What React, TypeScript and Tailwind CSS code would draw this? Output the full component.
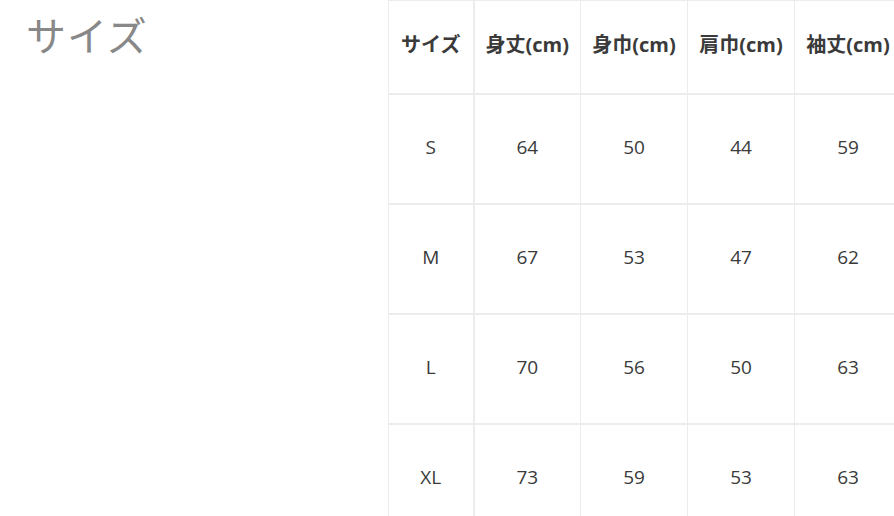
const headers = ["サイズ", "身丈(cm)", "身巾(cm)", "肩巾(cm)", "袖丈(cm)"];

const rows = [
  ["S", "64", "50", "44", "59"],
  ["M", "67", "53", "47", "62"],
  ["L", "70", "56", "50", "63"],
  ["XL", "73", "59", "53", "63"],
];

export default function App() {
  return (
    <div
      className="flex w-[894px] h-[516px] overflow-hidden bg-white"
      style={{ fontFamily: '"Open Sans", "Noto Sans CJK JP", sans-serif' }}
    >
      {/* Title */}
      <div className="w-[388px] shrink-0 pl-[26px] pt-[10px]">
        <h2 className="text-[40px] leading-[52px] text-[#888888] font-normal tracking-[1px]">
          サイズ
        </h2>
      </div>

      {/* Size table */}
      <table className="border-collapse text-[#3a3a3a] shrink-0">
        <thead>
          <tr className="h-[93px]">
            {headers.map((h, i) => (
              <th
                key={h}
                className={`border border-[#ececec] text-[20px] font-bold text-center px-0 pb-[4px] ${
                  i === 0 ? "w-[85px] border-r-2" : "w-[107px]"
                }`}
              >
                {h}
              </th>
            ))}
          </tr>
        </thead>
        <tbody>
          {rows.map((r) => (
            <tr key={r[0]} className="h-[110px]">
              {r.map((c, i) => (
                <td
                  key={i}
                  className={`border border-[#ececec] border-t-2 text-[19px] text-center pb-[3px] ${
                    i === 0 ? "border-r-2" : ""
                  }`}
                >
                  {c}
                </td>
              ))}
            </tr>
          ))}
        </tbody>
      </table>
    </div>
  );
}
